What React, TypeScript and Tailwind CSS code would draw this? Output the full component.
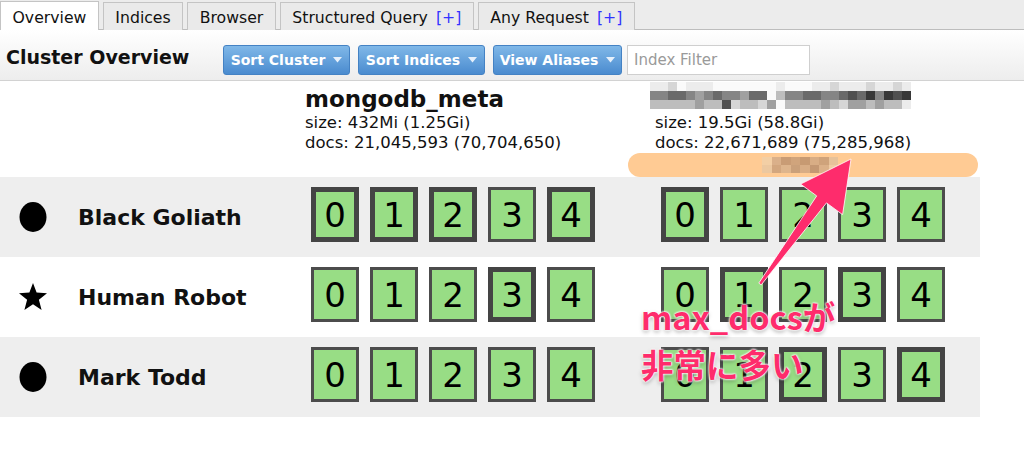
import React from 'react';

type Tab = { label: string; active?: boolean; plus?: boolean };

const tabs: Tab[] = [
  { label: 'Overview', active: true },
  { label: 'Indices' },
  { label: 'Browser' },
  { label: 'Structured Query', plus: true },
  { label: 'Any Request', plus: true },
];

type Node = { name: string; master: boolean; primaries: number[][] };

// primaries[i] = shard numbers that are primary on this node for index column i
const nodes: Node[] = [
  { name: 'Black Goliath', master: false, primaries: [[0, 1, 2, 4], [0]] },
  { name: 'Human Robot', master: true, primaries: [[3], [1, 3]] },
  { name: 'Mark Todd', master: false, primaries: [[], [2, 4]] },
];

const shade: Record<string, string> = {
  '0': 'bg-[#fafafa]',
  '1': 'bg-[#ececec]',
  '2': 'bg-[#d6d6d6]',
  '3': 'bg-[#bdbdbd]',
  '4': 'bg-[#a0a0a0]',
  '5': 'bg-[#858585]',
  '6': 'bg-[#6a6a6a]',
  '7': 'bg-[#505050]',
  '8': 'bg-[#383838]',
};

// pixelated index name
const mosaic = [
  '11201110000000100011211121121',
  '55665456554660355665567685878',
  '33333433723324033334324434331',
];

const aliasMosaic = [
  ['bg-[#f3cfa5]', 'bg-[#dab08a]', 'bg-[#c99c75]', 'bg-[#d0a47c]', 'bg-[#c79a72]', 'bg-[#d8ad85]', 'bg-[#cfa37b]', 'bg-[#e7c29a]'],
  ['bg-[#ecc8a0]', 'bg-[#d3a77f]', 'bg-[#deb58d]', 'bg-[#caa07a]', 'bg-[#d8ad85]', 'bg-[#c49873]', 'bg-[#dcb189]', 'bg-[#f0cca2]'],
];

const Caret = () => (
  <svg width="9" height="6" viewBox="0 0 9 6" className="ml-[8px]">
    <path d="M0 0 H9 L4.5 5.5 Z" fill="#e6f0fb" />
  </svg>
);

const Button: React.FC<{ label: string; width: string }> = ({ label, width }) => (
  <button
    className={`${width} h-[30px] flex items-center justify-center rounded-[3px] border border-[#4482c4] bg-linear-to-b from-[#80b8e8] to-[#4a8bcf] text-white font-bold text-[14px]`}
  >
    {label}
    <Caret />
  </button>
);

const ShardBox: React.FC<{ n: number; primary: boolean }> = ({ n, primary }) => (
  <div
    className={`w-[48px] h-[55px] flex items-center justify-center bg-[#98dd85] text-[34px] leading-none text-black ${
      primary ? 'border-[5px] border-[#444]' : 'border-[3px] border-[#4c4c4c]'
    }`}
  >
    {n}
  </div>
);

const NodeIcon: React.FC<{ master: boolean }> = ({ master }) =>
  master ? (
    <svg width="30" height="28" viewBox="0 0 30 28">
      <path d="M15 0 L18.6 9.6 L29 10.2 L20.9 16.8 L23.6 27 L15 21.2 L6.4 27 L9.1 16.8 L1 10.2 L11.4 9.6 Z" fill="#000" />
    </svg>
  ) : (
    <svg width="30" height="32" viewBox="0 0 30 32">
      <ellipse cx="15" cy="16" rx="13.5" ry="15" fill="#000" />
    </svg>
  );

export default function App() {
  return (
    <div className="relative w-[1024px] h-[452px] overflow-hidden bg-white font-['DejaVu_Sans',sans-serif] text-[#111]">
      {/* tab strip */}
      <div className="h-[30px] flex items-end gap-[4px] bg-[#ececec] border-b border-[#bdbdbd]">
        {tabs.map((t) => (
          <div
            key={t.label}
            className={`h-[28px] px-[11.5px] pt-[3px] flex items-center text-[15.7px] border border-b-0 border-[#c4c4c4] -mb-px ${
              t.active ? 'bg-white h-[29px]' : 'bg-[#eaeaea]'
            }`}
          >
            {t.label}
            {t.plus && <span className="ml-[8px] text-[#3333ff]">[+]</span>}
          </div>
        ))}
      </div>

      {/* toolbar */}
      <div className="h-[51px] flex items-end pb-[5px] border-b border-[#d2d2d2] bg-linear-to-b from-white to-[#ededed]">
        <h1 className="ml-[6px] mb-[3px] w-[217px] text-[19px] leading-[30px] font-bold">Cluster Overview</h1>
        <div className="flex items-center gap-[8px]">
          <Button label="Sort Cluster" width="w-[127px]" />
          <Button label="Sort Indices" width="w-[127px]" />
          <Button label="View Aliases" width="w-[129px]" />
        </div>
        <input
          placeholder="Index Filter"
          className="ml-[5px] w-[183px] h-[30px] px-[6px] border border-[#cfcfcf] bg-white text-[15px] placeholder:text-[#9a9a9a] outline-none"
        />
      </div>

      {/* cluster table */}
      <div className="w-[980px]">
        <div className="grid grid-cols-[278px_350px_350px] h-[96px]">
          <div />
          <div className="pl-[27px] pt-[4px]">
            <div className="text-[23px] font-bold leading-[28px]">mongodb_meta</div>
            <div className="text-[16.5px] leading-[20px]">size: 432Mi (1.25Gi)</div>
            <div className="text-[16.5px] leading-[20px]">docs: 21,045,593 (70,704,650)</div>
          </div>
          <div className="flex flex-col">
            <div className="ml-[22px] mt-[1px] flex flex-col">
              {mosaic.map((row, i) => (
                <div key={i} className="flex">
                  {row.split('').map((c, j) => (
                    <div key={j} className={`w-[9px] h-[9px] ${shade[c]}`} />
                  ))}
                </div>
              ))}
            </div>
            <div className="pl-[27px] mt-[4px]">
              <div className="text-[16.5px] leading-[20px]">size: 19.5Gi (58.8Gi)</div>
              <div className="text-[16.5px] leading-[20px]">docs: 22,671,689 (75,285,968)</div>
            </div>
            <div className="mt-auto h-[24px] rounded-full bg-[#ffcb94] flex items-center justify-center">
              <div className="flex flex-col -ml-[6px]">
                {aliasMosaic.map((row, i) => (
                  <div key={i} className="flex">
                    {row.map((c, j) => (
                      <div key={j} className={`w-[9.5px] h-[8px] ${c}`} />
                    ))}
                  </div>
                ))}
              </div>
            </div>
          </div>
        </div>

        {nodes.map((node, r) => (
          <div
            key={node.name}
            className={`grid grid-cols-[278px_350px_350px] h-[80px] ${r % 2 === 0 ? 'bg-[#eeeeee]' : 'bg-white'}`}
          >
            <div className="flex items-center pl-[18px]">
              <div className="w-[30px] flex justify-center">
                <NodeIcon master={node.master} />
              </div>
              <span className="ml-[30px] text-[22px] font-bold">{node.name}</span>
            </div>
            {node.primaries.map((prim, c) => (
              <div key={c} className="flex justify-center gap-[11px] pt-[10px]">
                {[0, 1, 2, 3, 4].map((n) => (
                  <ShardBox key={n} n={n} primary={prim.includes(n)} />
                ))}
              </div>
            ))}
          </div>
        ))}
      </div>

      {/* callout arrow and note */}
      <svg className="absolute left-0 top-0 pointer-events-none" width="1024" height="452">
        <polygon
          points="758.8,283.1 816.7,195.9 800.6,184.1 851,159 842.6,214.7 826.5,202.9 761.2,284.9"
          fill="#fe2c6c"
          stroke="#ffffff"
          strokeWidth="0.8"
          strokeLinejoin="round"
        />
      </svg>
      <div className="absolute left-[641px] top-[292px] font-['Noto_Sans_CJK_JP',sans-serif] font-bold text-[32.5px] leading-[48px] text-[#fe2c6c] [text-shadow:0_0_2px_#fff,0_0_2px_#fff,0_0_3px_#fff,0_2px_4px_rgba(0,0,0,0.35)]">
        <div>max_docsが</div>
        <div>非常に多い</div>
      </div>
    </div>
  );
}
